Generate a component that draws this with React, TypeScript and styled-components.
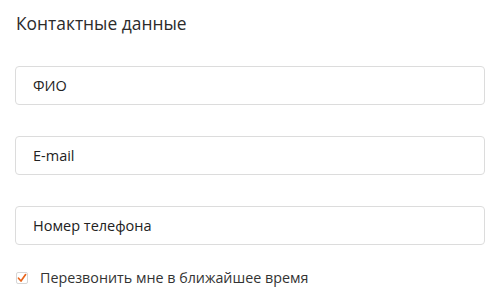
import styled, { createGlobalStyle } from 'styled-components'

const GlobalStyle = createGlobalStyle`
  body {
    margin: 0;
    background: #fff;
    font-family: 'Open Sans', 'Liberation Sans', sans-serif;
  }
`

export default function App() {
  return (
    <>
      <GlobalStyle />
      <Form>
        <Title>Контактные данные</Title>
        <Fields>
          <Input placeholder="ФИО" />
          <Input placeholder="E-mail" />
          <Input placeholder="Номер телефона" />
        </Fields>
        <CheckRow>
          <CheckBox>
            <svg width="10" height="10" viewBox="0 0 10 10">
              <path d="M1.5 5.2 L4 8 L8.6 1.6" fill="none" stroke="#e8641b" strokeWidth="1.7" strokeLinecap="round" strokeLinejoin="round" />
            </svg>
          </CheckBox>
          <CheckLabel>Перезвонить мне в ближайшее время</CheckLabel>
        </CheckRow>
      </Form>
    </>
  )
}

const Form = styled.div`
  width: 470px;
  padding: 11px 15px 0;
  display: flex;
  flex-direction: column;
`

const Title = styled.h2`
  margin: 0;
  font-size: 17.4px;
  font-weight: 400;
  color: #2b2b2b;
  line-height: 24px;
  padding-left: 1px;
`

const Fields = styled.div`
  display: flex;
  flex-direction: column;
  gap: 31px;
  margin-top: 31px;
`

const Input = styled.input`
  box-sizing: border-box;
  width: 100%;
  height: 39px;
  border: 1px solid #dcdcdc;
  border-radius: 4px;
  padding: 0 17px;
  font-family: 'Open Sans', 'Liberation Sans', sans-serif;
  font-size: 14.5px;
  color: #222;
  outline: none;
  &::placeholder {
    color: #222;
  }
`

const CheckRow = styled.label`
  display: flex;
  align-items: center;
  gap: 12px;
  margin-top: 23px;
  padding-left: 1px;
`

const CheckBox = styled.span`
  box-sizing: border-box;
  width: 12px;
  height: 12px;
  border: 1px solid #d6d6d6;
  border-radius: 2px;
  display: flex;
  align-items: center;
  justify-content: center;
`

const CheckLabel = styled.span`
  font-size: 14.3px;
  color: #333;
`
